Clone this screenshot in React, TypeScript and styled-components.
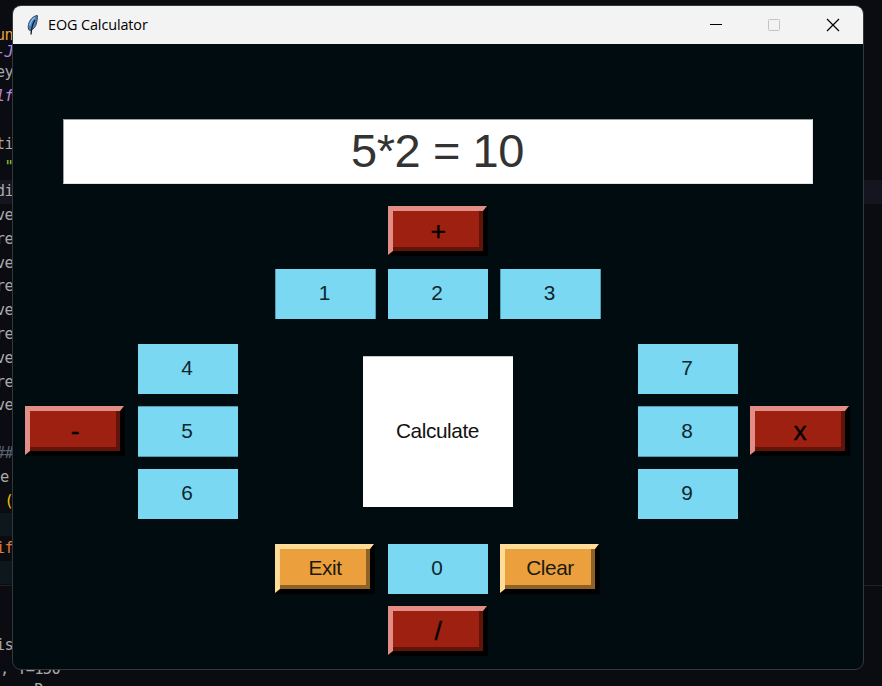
import React from "react";
import styled, { createGlobalStyle } from "styled-components";

const Global = createGlobalStyle`
  * { box-sizing: border-box; }
  body { margin: 0; background: #0b0c12; overflow: hidden; }
`;

const Desktop = styled.div`
  position: relative;
  width: 882px;
  height: 686px;
  overflow: hidden;
  background: #0b0c12;
`;

const Editor = styled.div`
  padding-top: 24px;
  font: 15.4px/23.8px "DejaVu Sans Mono", monospace;
  letter-spacing: -0.7px;
`;

const CodeLine = styled.div<{ $color?: string; $band?: string; $italic?: boolean; $rule?: boolean; $height?: number }>`
  height: ${(p) => p.$height ?? 23.8}px;
  color: ${(p) => p.$color ?? "#aaa9a6"};
  background: ${(p) => p.$band ?? "transparent"};
  font-style: ${(p) => (p.$italic ? "italic" : "normal")};
  white-space: pre;
  border-bottom: ${(p) => (p.$rule ? "1px solid #202127" : "0")};
`;

const CodeText = styled.span<{ $wide?: boolean; $band?: string }>`
  width: ${(p) => (p.$wide ? "90px" : "13px")};
  height: 23px;
  display: flex;
  justify-content: ${(p) => (p.$wide ? "flex-start" : "flex-end")};
  background: ${(p) => p.$band ?? "transparent"};
`;

const Window = styled.main`
  position: absolute;
  left: 12px;
  top: 5px;
  width: 852px;
  height: 665px;
  border: 1px solid #34383b;
  border-radius: 9px;
  overflow: hidden;
  background: #010c10;
  color: #111;
`;

const TitleBar = styled.header`
  height: 38px;
  padding: 0 23px 0 12px;
  display: flex;
  align-items: center;
  background: #f3f3f3;
`;

const Title = styled.h1`
  margin: 0 auto 0 8px;
  font: 400 14.4px/20px "Open Sans", "Noto Sans", sans-serif;
  letter-spacing: -0.1px;
  color: #000;
`;

const Controls = styled.div`
  display: flex;
  align-items: center;
  gap: 45px;
  svg { display: block; }
`;

const Display = styled.output`
  display: flex;
  align-items: center;
  justify-content: center;
  width: 750px;
  height: 65px;
  margin: 75px 0 0 50px;
  padding: 0 1px 2px 0;
  border: 1px solid #a0a0a0;
  border-right-color: #e3e3e3;
  border-bottom-color: #e3e3e3;
  background: #fff;
  color: #333;
  font: 47px/54px "Liberation Sans", Arial, sans-serif;
  letter-spacing: -0.4px;
`;

const Pad = styled.div`
  display: grid;
  margin: 22px 0 0 12px;
  grid-template-columns: 101px 12px 100px 37px 101px 12px 100px 12px 101px 37px 100px 12px 101px;
  grid-template-rows: 51px 12px 50px 25px 50px 12px 51px 12px 50px 25px 50px 12px 51px;
`;

const Key = styled.button<{ $col: number; $row: number }>`
  grid-column: ${(p) => p.$col};
  grid-row: ${(p) => p.$row};
  display: flex;
  align-items: center;
  justify-content: center;
  margin: 0;
  padding: 0 2.5px 2px 0;
  border: 0 solid #559aae;
  border-left-width: ${(p) => (p.$col === 5 || p.$col === 9 ? 1 : 0)}px;
  border-right-width: ${(p) => (p.$col === 5 || p.$col === 9 ? 1 : 0)}px;
  border-top-width: ${(p) => (p.$row === 7 ? 1 : 0)}px;
  border-bottom-width: ${(p) => (p.$row === 7 ? 1 : 0)}px;
  border-radius: 0;
  background: #7ad8f2;
  color: #10262c;
  font: 20.8px/24px "Liberation Sans", Arial, sans-serif;
  letter-spacing: -0.4px;
`;

const CalculateKey = styled(Key)`
  grid-column: 5 / 10;
  grid-row: 5 / 10;
  place-self: center;
  width: 150px;
  height: 151px;
  border: 0;
  border-top: 1px solid #c4c7c8;
  background: #fff;
  color: #111;
  padding: 0 1px 3px 0;
`;

const RaisedKey = styled(Key)<{ $tone: "red" | "amber" }>`
  width: 99px;
  height: 49px;
  padding: 0;
  border-style: solid;
  border-width: 5px 4px 4px 5px;
  border-color: ${(p) => (p.$tone === "red" ? "#e28d86 #000 #000 #e28d86" : "#ffdc98 #000 #000 #ffdc98")};
  box-shadow: 1px 1px 0 #000;
  background: ${(p) => (p.$tone === "red" ? "#9d2010" : "#eba03d")};
  color: ${(p) => (p.$tone === "red" ? "#000" : "#1b1a12")};
`;

const Face = styled.span<{ $tone: "red" | "amber"; $drop: number }>`
  display: flex;
  align-items: center;
  justify-content: center;
  width: 100%;
  height: 100%;
  padding: ${(p) => p.$drop}px 0 0 4px;
  border: 4px solid transparent;
  border-top: 0;
  border-left: 0;
  border-right-color: ${(p) => (p.$tone === "red" ? "#60140a" : "#8e6126")};
  border-bottom-color: ${(p) => (p.$tone === "red" ? "#60140a" : "#8e6126")};
  font-size: ${(p) => (p.$tone === "red" ? 26.5 : 20.8)}px;
  -webkit-text-stroke: ${(p) => (p.$tone === "red" ? "0.3px #000" : "0")};
`;

type Line = { t?: string; color?: string; band?: string; leftBand?: string; italic?: boolean; rule?: boolean; wide?: boolean; height?: number };

const lines: Line[] = [
  { t: "un", color: "#e8a33d", height: 17 },
  { t: "-J", color: "#b48be0", italic: true, height: 20.2 },
  { t: "ey" },
  { t: "lf", color: "#b48be0", italic: true },
  {},
  { t: "ti" },
  { t: '"', color: "#8cc63f" },
  { t: "di", band: "#14151f" },
  { t: "ve" },
  { t: "re" },
  { t: "ve" },
  { t: "re" },
  { t: "ve" },
  { t: "re" },
  { t: "ve" },
  { t: "re" },
  { t: "ve" },
  {},
  { t: "##", color: "#5c6370" },
  { t: "e", wide: true },
  { t: "(", color: "#f0c000" },
  { leftBand: "#0d181e" },
  { t: "if", color: "#dd7a35" },
  { leftBand: "#0d181e", rule: true, height: 25 },
  { height: 24.6 },
  {},
  { t: "is" },
  { t: ", T=150", wide: true, height: 21 },
  { t: "    R", wide: true },
];

const digits: [string, number, number][] = [
  ["1", 5, 3], ["2", 7, 3], ["3", 9, 3],
  ["4", 3, 5], ["5", 3, 7], ["6", 3, 9],
  ["7", 11, 5], ["8", 11, 7], ["9", 11, 9],
  ["0", 7, 11],
];

const raised: { t: string; col: number; row: number; tone: "red" | "amber"; drop: number }[] = [
  { t: "+", col: 7, row: 1, tone: "red", drop: 4 },
  { t: "-", col: 1, row: 7, tone: "red", drop: 4 },
  { t: "x", col: 13, row: 7, tone: "red", drop: 4 },
  { t: "/", col: 7, row: 13, tone: "red", drop: 4 },
  { t: "Exit", col: 5, row: 11, tone: "amber", drop: 1 },
  { t: "Clear", col: 9, row: 11, tone: "amber", drop: 1 },
];

const Feather = () => (
  <svg width="15" height="22" viewBox="0 0 15 22">
    <path d="M12.300 1.500C8 2 4.500 6 3.500 10.500c-.6 2.800-.2 4.500.8 5.800l1.400.2c3.200-1.500 5.300-4.500 5.800-7.500.4-2.500 1.300-4.500.8-7.500Z" fill="#4385cc" stroke="#3c4248" strokeWidth="1" />
    <path d="M10 6C8 9 6.500 12 6 20.500" stroke="#10161c" strokeWidth="1.300" fill="none" />
    <path d="M10 3.500C7.500 5 5.300 8 4.700 11.500" stroke="#8fbdea" strokeWidth="1.200" fill="none" />
  </svg>
);

export default function App() {
  return (
    <Desktop>
      <Global />
      <Editor>
        {lines.map((l, i) => (
          <CodeLine key={i} $color={l.color} $band={l.band} $italic={l.italic} $rule={l.rule} $height={l.height}>
            <CodeText $wide={l.wide} $band={l.leftBand}>{l.t}</CodeText>
          </CodeLine>
        ))}
      </Editor>
      <Window>
        <TitleBar>
          <Feather />
          <Title>EOG Calculator</Title>
          <Controls>
            <svg width="14" height="14"><path d="M2 6.500h12" stroke="#000" /></svg>
            <svg width="14" height="14"><rect x="1.500" y="1.500" width="11" height="11" rx="1" fill="none" stroke="#c3c3c3" /></svg>
            <svg width="14" height="14"><path d="M1 1l12 12M13 1L1 13" stroke="#000" strokeWidth="1.200" /></svg>
          </Controls>
        </TitleBar>
        <Display>5*2 = 10</Display>
        <Pad>
          {digits.map(([t, c, r]) => (
            <Key key={t} $col={c} $row={r}>{t}</Key>
          ))}
          {raised.map((k) => (
            <RaisedKey key={k.t} $col={k.col} $row={k.row} $tone={k.tone}>
              <Face $tone={k.tone} $drop={k.drop}>{k.t}</Face>
            </RaisedKey>
          ))}
          <CalculateKey $col={7} $row={5}>Calculate</CalculateKey>
        </Pad>
      </Window>
    </Desktop>
  );
}
